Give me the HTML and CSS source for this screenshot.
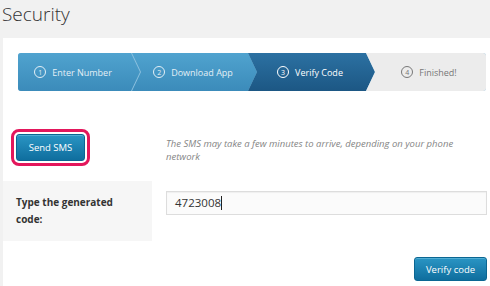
FILE: index.html
```html
<!doctype html>
<html lang="en">
    <head>
        <title>Security</title>
        <meta name="viewport" content="width=device-width, initial-scale=1"/>
        <link rel="stylesheet" href="styles.css">
    </head>
    <body>
        <h1 class="page-title">Security</h1>
        <div class="panel">
            <ol class="wizard">
                <li class="step step--first step--done"><span class="num">1</span>Enter Number</li>
                <li class="step step--done"><span class="num">2</span>Download App</li>
                <li class="step step--active"><span class="num">3</span>Verify Code</li>
                <li class="step step--last"><span class="num">4</span>Finished!</li>
            </ol>
            <div class="form-row form-row--sms">
                <div class="form-label">
                    <button class="btn btn--sms" type="button">Send SMS</button>
                </div>
                <div class="form-field">
                    <p class="hint">The SMS may take a few minutes to arrive, depending on your phone network</p>
                </div>
            </div>
            <div class="form-row form-row--code">
                <div class="form-label form-label--grey">Type the generated code:</div>
                <div class="form-field">
                    <div class="code-input">4723008<span class="caret"></span></div>
                </div>
            </div>
            <div class="actions">
                <button class="btn" type="button">Verify code</button>
            </div>
        </div>
    </body>
</html>
```

FILE: styles.css
```css
body {
    margin: 0;
    background-color: #f1f1f1;
    font-family: "Open Sans", "DejaVu Sans", sans-serif;
    color: #444;
    height: 286px;
    overflow: hidden;
}
.page-title {
    margin: 0;
    height: 38px;
    padding: 0 0 0 2px;
    box-sizing: border-box;
    font-size: 19px;
    font-weight: 300;
    line-height: 28px;
    color: #333;
}
.panel {
    margin-left: 3px;
    background-color: #fff;
    padding: 15px 3px 0 0;
    height: 248px;
    box-sizing: border-box;
}
.wizard {
    list-style: none;
    margin: 0 1px 0 15px;
    padding: 0;
    display: flex;
    height: 38px;
    border-radius: 3px;
    overflow: hidden;
    background-color: #8cc1df;
}
.step {
    display: flex;
    align-items: center;
    justify-content: center;
    height: 38px;
    box-sizing: border-box;
    padding: 0 12px 0 9px;
    font-size: 9px;
    color: #e3eff6;
    background: linear-gradient(#50a3cf, #3b8bba);
    clip-path: polygon(0 0, calc(100% - 9px) 0, 100% 50%, calc(100% - 9px) 100%, 0 100%, 9px 50%);
    margin-left: -8px;
    width: 125px;
}
.step--first {
    margin-left: 0;
    width: 122px;
    padding-left: 0;
    clip-path: polygon(0 0, calc(100% - 9px) 0, 100% 50%, calc(100% - 9px) 100%, 0 100%);
}
.step--active {
    margin-left: -9px;
    width: 127px;
    color: #fff;
    background: linear-gradient(#2c71a2, #1c5784);
}
.step--last {
    margin-left: -9px;
    flex: 1;
    width: auto;
    padding-right: 3px;
    color: #777;
    background: #ececec;
    clip-path: polygon(0 0, 100% 0, 100% 100%, 0 100%, 9px 50%);
}
.num {
    display: inline-flex;
    align-items: center;
    justify-content: center;
    width: 10px;
    height: 10px;
    border: 1.5px solid currentColor;
    border-radius: 50%;
    font-size: 7px;
    margin-right: 6px;
}
.form-row {
    display: grid;
    grid-template-columns: 149px 1fr;
}
.form-row--sms {
    height: 90px;
}
.form-row--code {
    height: 60px;
}
.form-label {
    padding: 43px 0 0 13px;
}
.form-label--grey {
    background-color: #f6f6f6;
    padding: 13px 20px 0 13px;
    font-size: 10px;
    font-weight: 700;
    line-height: 17px;
    color: #333;
}
.form-field {
    padding-left: 14px;
}
.hint {
    margin: 0;
    padding-top: 46px;
    font-size: 9.5px;
    font-style: italic;
    line-height: 13px;
    color: #858585;
}
.code-input {
    margin-top: 10px;
    height: 24px;
    box-sizing: border-box;
    border: 1px solid #ddd;
    background-color: #fbfbfb;
    padding-left: 8px;
    font-size: 11.5px;
    line-height: 22px;
    color: #333;
    box-shadow: inset 0 1px 1px rgba(0, 0, 0, 0.05);
}
.caret {
    display: inline-block;
    width: 1px;
    height: 14px;
    background-color: #222;
    vertical-align: -3px;
}
.btn {
    font-family: inherit;
    font-size: 9.5px;
    color: #fff;
    background: linear-gradient(#2a95c4, #0f6e9e);
    border: 1px solid #0b6692;
    border-radius: 3px;
    height: 24px;
    padding: 0 12px;
    box-shadow: inset 0 1px 0 rgba(120, 200, 230, 0.5);
}
.btn--sms {
    height: 27px;
    width: 69px;
    padding: 0;
    outline: 3px solid #e3175c;
    outline-offset: 2px;
}
.actions {
    display: flex;
    justify-content: flex-end;
    padding-top: 16px;
}
.actions .btn {
    width: 73px;
    padding: 0;
}
```
